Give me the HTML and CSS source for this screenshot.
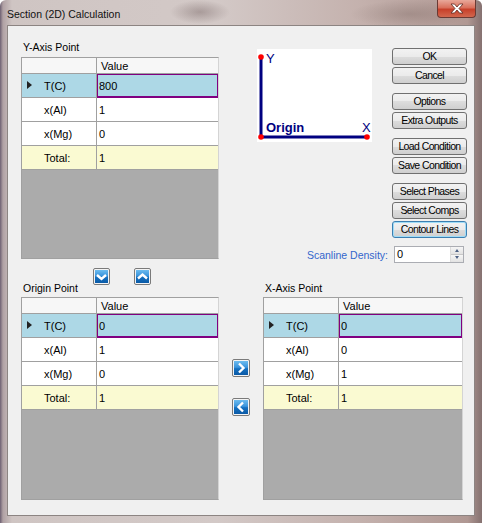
FILE: index.html
```html
<!DOCTYPE html>
<html lang="en">
<head>
    <meta charset="UTF-8">
    <title>Section (2D) Calculation</title>
    <link rel="stylesheet" href="styles.css">
</head>
<body>
<div class="window">
    <div class="titlebar">
        <span class="title">Section (2D) Calculation</span>
        <span class="close">
            <svg width="14" height="11" viewBox="0 0 14 11">
                <path d="M1 1 L4.5 1 L7 4 L9.5 1 L13 1 L9 5.5 L13 10 L9.5 10 L7 7 L4.5 10 L1 10 L5 5.5 Z" fill="#fff" stroke="#5a2a22" stroke-width="0.8"/>
            </svg>
        </span>
    </div>

    <div class="client">
        <div class="top">
            <div class="panel panel-y">
                <div class="caption">Y-Axis Point</div>
                <div class="grid">
                    <div class="sheet">
                        <div class="cell head"></div>
                        <div class="cell head value">Value</div>
                        <div class="cell rowhead selected"><span class="arrow"></span>T(C)</div>
                        <div class="cell value selected current">800</div>
                        <div class="cell rowhead">x(Al)</div>
                        <div class="cell value">1</div>
                        <div class="cell rowhead">x(Mg)</div>
                        <div class="cell value">0</div>
                        <div class="cell rowhead total">Total:</div>
                        <div class="cell value total">1</div>
                    </div>
                </div>
            </div>

            <div class="side">
                <div class="side-top">
                    <svg class="diagram" viewBox="0 0 115 93">
                        <line x1="4" y1="8" x2="4" y2="88" stroke="#000080" stroke-width="3"/>
                        <line x1="4" y1="88" x2="110" y2="88" stroke="#000080" stroke-width="3"/>
                        <circle cx="4" cy="8" r="2.8" fill="#f00"/>
                        <circle cx="4" cy="88" r="2.8" fill="#f00"/>
                        <circle cx="110" cy="88" r="2.8" fill="#f00"/>
                        <text x="9" y="14" class="axis">Y</text>
                        <text x="9" y="83" class="axis bold">Origin</text>
                        <text x="105" y="83" class="axis">X</text>
                    </svg>
                    <div class="buttons">
                        <button class="btn">OK</button>
                        <button class="btn">Cancel</button>
                        <button class="btn group">Options</button>
                        <button class="btn">Extra Outputs</button>
                        <button class="btn group">Load Condition</button>
                        <button class="btn">Save Condition</button>
                        <button class="btn group">Select Phases</button>
                        <button class="btn">Select Comps</button>
                        <button class="btn focus">Contour Lines</button>
                    </div>
                </div>
                <div class="scanline">
                    <span class="scanline-label">Scanline Density:</span>
                    <div class="spin">
                        <span class="spin-val">0</span>
                        <span class="spin-btns">
                            <span class="spin-up"></span>
                            <span class="spin-down"></span>
                        </span>
                    </div>
                </div>
            </div>
        </div>

        <div class="bottom">
            <div class="panel panel-origin">
                <div class="origin-head">
                    <div class="caption">Origin Point</div>
                    <div class="move">
                        <span class="icon-btn">
                            <svg class="icon" viewBox="0 0 13 13"><polyline points="2,5 6.5,9 11,5" /></svg>
                        </span>
                        <span class="icon-btn">
                            <svg class="icon" viewBox="0 0 13 13"><polyline points="2,8.5 6.5,4.5 11,8.5" /></svg>
                        </span>
                    </div>
                </div>
                <div class="grid tall">
                    <div class="sheet">
                        <div class="cell head"></div>
                        <div class="cell head value">Value</div>
                        <div class="cell rowhead selected"><span class="arrow"></span>T(C)</div>
                        <div class="cell value selected current">0</div>
                        <div class="cell rowhead">x(Al)</div>
                        <div class="cell value">1</div>
                        <div class="cell rowhead">x(Mg)</div>
                        <div class="cell value">0</div>
                        <div class="cell rowhead total">Total:</div>
                        <div class="cell value total">1</div>
                    </div>
                </div>
            </div>

            <div class="swap">
                <span class="icon-btn big">
                    <svg class="icon" viewBox="0 0 14 14"><polyline points="5,2.5 9.5,7 5,11.5" /></svg>
                </span>
                <span class="icon-btn big">
                    <svg class="icon" viewBox="0 0 14 14"><polyline points="9,2.5 4.5,7 9,11.5" /></svg>
                </span>
            </div>

            <div class="panel panel-x">
                <div class="x-head">
                    <div class="caption">X-Axis Point</div>
                </div>
                <div class="grid tall">
                    <div class="sheet">
                        <div class="cell head"></div>
                        <div class="cell head value">Value</div>
                        <div class="cell rowhead selected"><span class="arrow"></span>T(C)</div>
                        <div class="cell value selected current">0</div>
                        <div class="cell rowhead">x(Al)</div>
                        <div class="cell value">0</div>
                        <div class="cell rowhead">x(Mg)</div>
                        <div class="cell value">1</div>
                        <div class="cell rowhead total">Total:</div>
                        <div class="cell value total">1</div>
                    </div>
                </div>
            </div>
        </div>
    </div>
</div>
</body>
</html>
```

FILE: styles.css
```css
body {
    margin: 0;
    font-family: "Liberation Sans", Arial, sans-serif;
    font-size: 10px;
    color: #000;
}
.window {
    width: 482px;
    height: 523px;
    box-sizing: border-box;
    padding: 0 7px 7px;
    display: flex;
    flex-direction: column;
    border-radius: 6px 6px 0 0;
    background:
        radial-gradient(ellipse 30px 12px at 200px 12px, rgba(90, 70, 70, 0.35), transparent),
        radial-gradient(ellipse 60px 14px at 410px 14px, rgba(110, 90, 85, 0.3), transparent),
        linear-gradient(90deg, #6d6072 0, #b0a1a4 3px, #cfc5c3 12px, #d3c9c7 45%, #c4b1ad 75%, #b09893 97%, #857170 100%);
}
.titlebar {
    height: 25px;
    display: flex;
    align-items: flex-start;
}
.title {
    margin-top: 8px;
    font-size: 10.5px;
    line-height: 12px;
    color: #111;
}
.close {
    margin-left: auto;
    margin-right: -1px;
    width: 39px;
    height: 18px;
    box-sizing: border-box;
    border: 1px solid #6a3a34;
    border-top: none;
    border-radius: 0 0 4px 4px;
    background: linear-gradient(#e8a89a 0, #d9705c 45%, #c7402a 55%, #d2674e 100%);
    display: flex;
    align-items: center;
    justify-content: center;
}
.client {
    flex: 1;
    background: #f0f0f0;
    border: 1px solid #8c8482;
    padding-top: 15px;
}

/* top part */
.top {
    display: flex;
}
.panel-y,
.panel-origin {
    margin-left: 13px;
    width: 198px;
}
.caption {
    height: 12px;
    line-height: 12px;
    padding-left: 2px;
    margin-bottom: 4px;
    font-size: 10.5px;
}
.grid {
    height: 202px;
    box-sizing: border-box;
    background: #ababab;
    border: 1px solid #a0a0a0;
    border-right-color: #d4d4d4;
}
.grid.tall {
    height: 203px;
}
.sheet {
    display: grid;
    grid-template-columns: 75px 1fr;
    grid-template-rows: 16px;
    grid-auto-rows: 24px;
    font-size: 11px;
}
.cell {
    box-sizing: border-box;
    display: flex;
    align-items: center;
    background: #fff;
    border-bottom: 1px solid #a0a0a0;
    padding-left: 2px;
}
.cell.head {
    background: #f7f7f7;
    border-right: 1px solid #a0a0a0;
}
.cell.head.value {
    border-right: none;
    padding-left: 4px;
}
.cell.rowhead {
    border-right: 1px solid #a0a0a0;
    padding-left: 22px;
    position: relative;
}
.cell.selected {
    background: #add8e6;
}
.cell.current {
    box-shadow: inset 1px 0 0 #800080, inset -1px -1px 0 #800080, inset 0 1px 0 #800080;
    border-bottom-color: #800080;
}
.cell.total {
    background: #fafad2;
}
.arrow {
    position: absolute;
    left: 5px;
    top: 7px;
    border-left: 5px solid #222;
    border-top: 4px solid transparent;
    border-bottom: 4px solid transparent;
}

/* diagram and buttons */
.side {
    margin-left: 38px;
    display: flex;
    flex-direction: column;
}
.side-top {
    display: flex;
}
.diagram {
    display: block;
    margin-top: 8px;
    width: 115px;
    height: 93px;
    background: #fff;
}
.axis {
    font-family: "Liberation Sans", Arial, sans-serif;
    font-size: 13px;
    fill: #000080;
}
.axis.bold {
    font-weight: bold;
}
.buttons {
    margin-left: 20px;
    margin-top: 7px;
    width: 75px;
    display: flex;
    flex-direction: column;
}
.btn {
    height: 17px;
    margin: 2px 0 0;
    padding: 0;
    box-sizing: border-box;
    border: 1px solid #707070;
    border-radius: 3px;
    background: linear-gradient(#f2f2f2 0, #ebebeb 50%, #dddddd 50%, #cfcfcf 100%);
    font-family: "Liberation Sans", Arial, sans-serif;
    font-size: 10.5px;
    letter-spacing: -0.6px;
    color: #000;
    line-height: 15px;
}
.btn:first-child {
    margin-top: 0;
}
.btn.group {
    margin-top: 9px;
}
.btn.focus {
    border-color: #3c7fb1;
    box-shadow: inset 0 0 0 1px #9fdcf7;
}

.scanline {
    margin-top: 8px;
    margin-right: 3px;
    display: flex;
    justify-content: flex-end;
    align-items: center;
}
.scanline-label {
    color: #3366cc;
    margin-right: 6px;
    font-size: 10.5px;
}
.spin {
    width: 70px;
    height: 17px;
    box-sizing: border-box;
    border: 1px solid #abadb3;
    background: #fff;
    display: flex;
    font-size: 11px;
}
.spin-val {
    flex: 1;
    padding-left: 2px;
    line-height: 15px;
}
.spin-btns {
    width: 12px;
    display: flex;
    flex-direction: column;
    border-left: 1px solid #dcdcdc;
}
.spin-up,
.spin-down {
    flex: 1;
    position: relative;
    background: linear-gradient(#f6f6f6, #e2e2e2);
}
.spin-up {
    border-bottom: 1px solid #c8c8c8;
}
.spin-up::after,
.spin-down::after {
    content: "";
    position: absolute;
    left: 4px;
    top: 2px;
    border-left: 2px solid transparent;
    border-right: 2px solid transparent;
}
.spin-up::after {
    border-bottom: 3px solid #4d6185;
}
.spin-down::after {
    border-top: 3px solid #4d6185;
    top: 1px;
}

/* bottom part */
.bottom {
    display: flex;
    margin-top: 5px;
}
.origin-head,
.x-head {
    height: 29px;
    display: flex;
    align-items: flex-start;
}
.origin-head .caption,
.x-head .caption {
    margin-top: 14px;
    margin-bottom: 0;
}
.origin-head .caption {
    width: 70px;
}
.move {
    display: flex;
    gap: 24px;
}
.icon-btn {
    width: 17px;
    height: 17px;
    box-sizing: border-box;
    border: 1px solid #7a7a7a;
    border-radius: 2px;
    padding: 1px;
    background: #f4f4f4;
    display: block;
}
.icon-btn.big {
    width: 18px;
    height: 18px;
}
.icon {
    display: block;
    width: 100%;
    height: 100%;
    background: linear-gradient(#6cbcef 0, #3a94dc 45%, #1470c0 55%, #0b5aa6 100%);
}
.icon polyline {
    fill: none;
    stroke: #fff;
    stroke-width: 2.4;
}
.swap {
    margin-left: 13px;
    width: 18px;
    padding-top: 91px;
    display: flex;
    flex-direction: column;
    gap: 21px;
}
.panel-x {
    margin-left: 13px;
    width: 200px;
}
```
